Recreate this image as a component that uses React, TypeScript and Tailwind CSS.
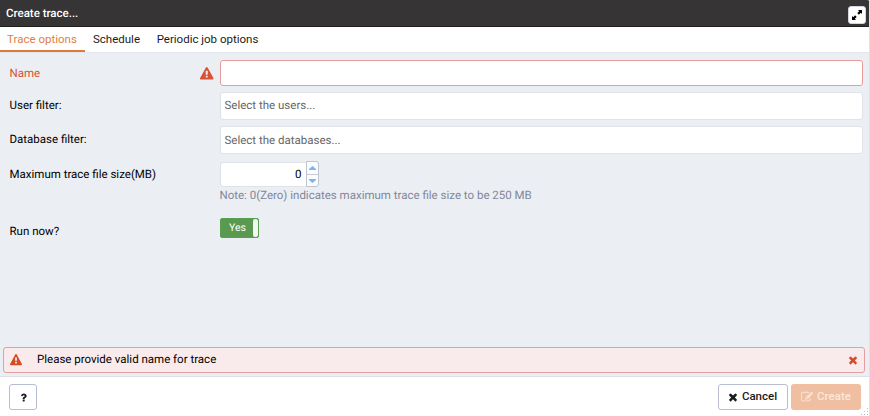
import React from "react";

const WARNING =
  "M1024 1375v-190q0-14-9.5-23.5t-22.5-9.5h-192q-13 0-22.5 9.5t-9.5 23.5v190q0 14 9.5 23.5t22.5 9.5h192q13 0 22.5-9.5t9.5-23.5zm-2-374l18-459q0-12-10-19-13-11-24-11h-220q-11 0-24 11-10 7-10 21l17 457q0 10 10 16.5t24 6.5h185q14 0 23.5-6.5t10.5-16.5zm-14-934l768 1408q35 63-2 126-17 29-46.5 46t-63.5 17h-1536q-34 0-63.5-17t-46.5-46q-37-63-2-126l768-1408q17-31 47-49t65-18 65 18 47 49z";
const TIMES =
  "M1490 1322q0 40-28 68l-136 136q-28 28-68 28t-68-28l-294-294-294 294q-28 28-68 28t-68-28l-136-136q-28-28-28-68t28-68l294-294-294-294q-28-28-28-68t28-68l136-136q28-28 68-28t68 28l294 294 294-294q28-28 68-28t68 28l136 136q28 28 28 68t-28 68l-294 294 294 294q28 28 28 68z";
const EDIT =
  "M888 1184l116-116-152-152-116 116v56h96v96h56zm440-720q-16-16-33 1l-350 350q-17 17-1 33t33-1l350-350q17-17 1-33zm80 594v190q0 119-84.5 203.5t-203.5 84.5h-832q-119 0-203.5-84.5t-84.5-203.5v-832q0-119 84.5-203.5t203.5-84.5h832q63 0 117 25 15 7 18 23 3 17-9 29l-49 49q-14 14-32 8-23-6-45-6h-832q-66 0-113 47t-47 113v832q0 66 47 113t113 47h832q66 0 113-47t47-113v-126q0-13 9-22l64-64q15-15 35-7t20 29zm-96-738l288 288-672 672h-288v-288zm444 132l-92 92-288-288 92-92q28-28 68-28t68 28l152 152q28 28 28 68t-28 68z";
const QUESTION =
  "M1088 1256v240q0 16-12 28t-28 12h-240q-16 0-28-12t-12-28v-240q0-16 12-28t28-12h240q16 0 28 12t12 28zm316-600q0 54-15.500 101t-35 76.500-55 59.500-57.500 43.500-61 35.500q-41 23-68.500 65t-27.500 67q0 17-12 32.500t-28 15.500h-240q-15 0-25.500-18.500t-10.500-37.500v-45q0-83 65-156.500t143-108.500q59-27 84-56t25-76q0-42-46.500-74t-107.500-32q-65 0-108 29-35 25-107 115-13 16-31 16-12 0-25-8l-164-125q-13-10-15.500-25t5.500-28q160-266 464-266 80 0 161 31t146 83 106 127.500 41 158.500z";

function Icon({ d, className }: { d: string; className: string }) {
  return (
    <svg viewBox="0 0 1792 1792" fill="currentColor" className={`shrink-0 ${className}`}>
      <path d={d} />
    </svg>
  );
}

function Row({ label, className, children }: { label: string; className: string; children: React.ReactNode }) {
  return (
    <div className={`flex items-start ${className}`}>
      <div className="w-[210px] shrink-0 pt-1.5 leading-[14px]">{label}</div>
      {children}
    </div>
  );
}

export default function App() {
  return (
    <div className="flex h-[416px] w-[870px] flex-col overflow-hidden border-r border-[#dfe3e8] bg-white font-['Roboto',sans-serif] text-[11.5px] text-[#1b1b1b] [text-rendering:geometricPrecision]">
      <header className="-mr-px flex h-[27px] shrink-0 items-center justify-between rounded-tr-[3px] border-b border-[#201e1f] bg-[#363435] pr-1 pl-1.5 font-medium text-white">
        <span className="pt-px">Create trace...</span>
        <button className="mt-[3px] flex size-[18px] items-center justify-center rounded-[3px] border border-[#d3d5e2] bg-white text-black">
          <svg viewBox="0 0 10 10" className="size-[10px]" fill="currentColor">
            <path d="M6 0h4v4L8.800 2.800 6.900 4.700 5.300 3.100 7.200 1.200zM0 6l1.200 1.200 1.900-1.900 1.600 1.600-1.900 1.900L4 10H0z" />
          </svg>
        </button>
      </header>
      <nav className="flex h-[26px] shrink-0 border-b border-[#e3e6ea] bg-white">
        <button className="w-[85px] border-b-2 border-[#dd7a3d] pt-[2px] pr-px text-[#df8043]">Trace options</button>
        <button className="w-[63px] pt-px">Schedule</button>
        <button className="w-[119px] pt-px">Periodic job options</button>
      </nav>
      <main className="flex min-h-0 flex-1 flex-col bg-[#ebeef3]">
        <div className="flex flex-1 flex-col pt-[7px] pr-[6px] pl-[9.500px] text-black">
          <div className="flex h-[26px] items-center text-[#d95234]">
            <span className="w-[190.500px] pt-px">Name</span>
            <Icon d={WARNING} className="mt-0.5 mr-[6px] size-[13.500px]" />
            <input className="h-[26px] min-w-0 flex-1 rounded-[3px] border border-[#e79c9b] bg-white outline-none" />
          </div>
          <Row label="User filter:" className="mt-[6px] h-7">
            <div className="flex h-7 flex-1 items-center rounded-[3px] border border-[#dfe2e7] bg-white px-1 text-[#666]">Select the users...</div>
          </Row>
          <Row label="Database filter:" className="mt-[6px] h-7">
            <div className="flex h-7 flex-1 items-center rounded-[3px] border border-[#dfe2e7] bg-white px-1 pt-px text-[#666]">Select the databases...</div>
          </Row>
          <Row label="Maximum trace file size(MB)" className="mt-[7px] h-[41px]">
            <div>
              <div className="flex h-[26px] items-center">
                <div className="flex h-[25px] w-[86px] items-center justify-end rounded-l-[3px] border border-r-0 border-[#dfe2e7] bg-white pt-px pr-1">0</div>
                <div className="flex h-[26px] w-[13px] flex-col rounded-r-[3px] border border-[#bfc4d0] bg-[#fcfcfe] text-[#7db5ec]">
                  <span className="flex h-[13px] items-center justify-center border-b border-[#c6cad3]">
                    <svg viewBox="0 0 7 4" className="h-1 w-[7px]" fill="currentColor"><path d="M3.500 0L7 3v1H0V3z" /></svg>
                  </span>
                  <span className="flex flex-1 items-center justify-center">
                    <svg viewBox="0 0 7 4" className="h-1 w-[7px]" fill="currentColor"><path d="M0 0h7v1L3.500 4 0 1z" /></svg>
                  </span>
                </div>
              </div>
              <p className="leading-4 text-[#818799]">Note: 0(Zero) indicates maximum trace file size to be 250 MB</p>
            </div>
          </Row>
          <Row label="Run now?" className="mt-[16px]">
            <div className="flex h-5 w-[39px] overflow-hidden rounded-[2px] border border-[#5a9f51] bg-[#5a9a50] text-[10.5px] text-white">
              <span className="w-8 pl-0.5 text-center leading-[17px]">Yes</span>
              <span className="h-full flex-1 rounded-[2px] bg-[#f4f6f4]" />
            </div>
          </Row>
        </div>
        <div className="mr-1 mb-[3px] ml-[3px] flex h-[26px] items-center rounded-[3px] border border-[#e39e9d] bg-[#f9ebec] pr-[5px] pl-[6px] text-black">
          <Icon d={WARNING} className="mr-[15px] size-3 text-[#d64b27]" />
          <span className="flex-1">Please provide valid name for trace</span>
          <Icon d={TIMES} className="size-3 text-[#d64b27]" />
        </div>
      </main>
      <footer className="relative flex h-10 shrink-0 items-start border-t border-[#dde1e7] bg-white pt-[7px] pr-2 pl-[9px] font-medium">
        <button className="flex h-[26px] w-7 items-center justify-center rounded-[3px] border border-[#b9bdd2]">
          <Icon d={QUESTION} className="size-[11px]" />
        </button>
        <button className="ml-auto flex h-[26px] w-[70px] items-center justify-center gap-[3px] rounded-[3px] border border-[#b9bdd2] pr-[2px]">
          <Icon d={TIMES} className="size-3" />
          Cancel
        </button>
        <button className="ml-[3px] flex h-[26px] w-[70px] items-center justify-center gap-[4px] rounded-[3px] bg-[#f0bfa1] text-[#fae7dc]">
          <Icon d={EDIT} className="size-3" />
          Create
        </button>
        <svg viewBox="0 0 8 8" className="absolute right-0 bottom-0 size-2" fill="#bbb">
          <path d="M6 0h1v1H6zM3 3h1v1H3zM6 3h1v1H6zM0 6h1v1H0zM3 6h1v1H3zM6 6h1v1H6z" />
        </svg>
      </footer>
    </div>
  );
}
